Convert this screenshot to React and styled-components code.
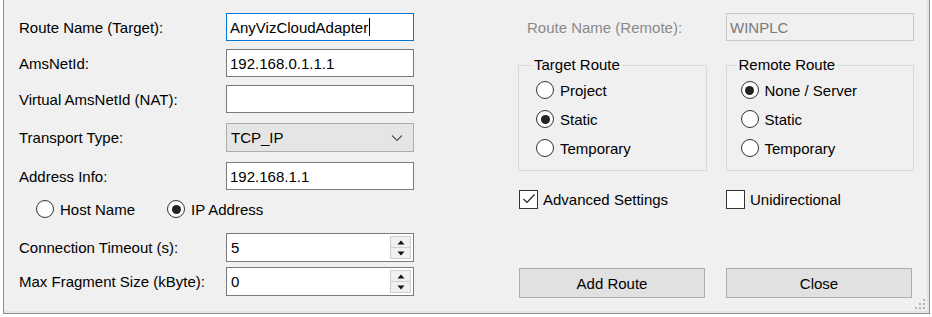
import React from "react";
import styled, { createGlobalStyle } from "styled-components";

const GlobalStyle = createGlobalStyle`
  html, body {
    margin: 0;
    padding: 0;
    background: #ffffff;
  }
  body {
    font-family: "Liberation Sans", Arial, sans-serif;
    font-size: 15px;
    color: #000;
  }
`;

const AddRouteDialog = () => {
  return (
    <Frame>
      <GlobalStyle />
      <LeftColumn>
        <Row $mt={0}>
          <Label>Route Name (Target):</Label>
          <TextBox $focused>
            AnyVizCloudAdapter
            <Caret />
          </TextBox>
        </Row>
        <Row $mt={8}>
          <Label>AmsNetId:</Label>
          <TextBox>192.168.0.1.1.1</TextBox>
        </Row>
        <Row $mt={8}>
          <Label>Virtual AmsNetId (NAT):</Label>
          <TextBox />
        </Row>
        <Row $mt={10}>
          <Label>Transport Type:</Label>
          <Combo>
            TCP_IP
            <svg width="12" height="8" viewBox="0 0 12 8">
              <polyline points="1,1.5 6,6.5 11,1.5" fill="none" stroke="#555" strokeWidth="1.2" />
            </svg>
          </Combo>
        </Row>
        <Row $mt={11}>
          <Label>Address Info:</Label>
          <TextBox>192.168.1.1</TextBox>
        </Row>
        <RadioRow>
          <Radio label="Host Name" />
          <Radio label="IP Address" checked />
        </RadioRow>
        <Row $mt={14}>
          <Label>Connection Timeout (s):</Label>
          <SpinBox value="5" />
        </Row>
        <Row $mt={6}>
          <Label>Max Fragment Size (kByte):</Label>
          <SpinBox value="0" />
        </Row>
      </LeftColumn>

      <RightColumn>
        <Row $mt={0}>
          <Label $disabled $indent={8}>Route Name (Remote):</Label>
          <TextBox $disabled>WINPLC</TextBox>
        </Row>
        <Groups>
          <Group $inset={17}>
            <Legend>Target Route</Legend>
            <Radio label="Project" />
            <Radio label="Static" checked />
            <Radio label="Temporary" />
          </Group>
          <Group $inset={14}>
            <Legend>Remote Route</Legend>
            <Radio label="None / Server" checked />
            <Radio label="Static" />
            <Radio label="Temporary" />
          </Group>
        </Groups>
        <Checks>
          <Check label="Advanced Settings" checked />
          <Check label="Unidirectional" />
        </Checks>
        <Buttons>
          <Button>Add Route</Button>
          <Button>Close</Button>
        </Buttons>
      </RightColumn>
      <Grip>
        {[
          [2, 0],
          [1, 1],
          [2, 1],
          [0, 2],
          [1, 2],
          [2, 2],
        ].map(([c, r]) => (
          <Dot key={`${c}-${r}`} style={{ left: c * 4, top: r * 4 }} />
        ))}
      </Grip>
    </Frame>
  );
};

const Radio = ({ label, checked }) => (
  <RadioItem>
    <Circle $checked={checked} />
    <span>{label}</span>
  </RadioItem>
);

const Check = ({ label, checked }) => (
  <CheckItem>
    <Box>
      {checked && (
        <svg width="14" height="14" viewBox="0 0 14 14">
          <polyline points="1.5,7 5,10.5 12.5,2.5" fill="none" stroke="#222" strokeWidth="1.2" />
        </svg>
      )}
    </Box>
    <span>{label}</span>
  </CheckItem>
);

const SpinBox = ({ value }) => (
  <Spin>
    <span>{value}</span>
    <SpinButtons>
      <SpinHalf>
        <svg width="8" height="5" viewBox="0 0 8 5">
          <polygon points="0.5,4.5 4,0.5 7.5,4.5" fill="#111" />
        </svg>
      </SpinHalf>
      <SpinHalf $bottom>
        <svg width="8" height="5" viewBox="0 0 8 5">
          <polygon points="0.5,0.5 4,4.5 7.5,0.5" fill="#111" />
        </svg>
      </SpinHalf>
    </SpinButtons>
  </Spin>
);

const Frame = styled.div`
  position: relative;
  box-sizing: border-box;
  margin-left: 3px;
  width: 927px;
  height: 314px;
  background: #f0f0f0;
  border: 1px solid #8e8e8e;
  border-top: none;
  box-shadow: inset -2px -2px 0 #e4e4e4;
  display: flex;
  padding: 13px 0 0 15px;
`;

const LeftColumn = styled.div`
  width: 500px;
  display: flex;
  flex-direction: column;
`;

const RightColumn = styled.div`
  width: 395px;
  display: flex;
  flex-direction: column;
`;

const Row = styled.div`
  display: grid;
  grid-template-columns: 207px 188px;
  align-items: center;
  height: 28px;
  margin-top: ${(p) => p.$mt}px;
`;

const Label = styled.div`
  padding-left: ${(p) => p.$indent || 0}px;
  color: ${(p) => (p.$disabled ? "#8a8a8a" : "#000")};
  white-space: nowrap;
`;

const TextBox = styled.div`
  box-sizing: border-box;
  height: 28px;
  display: flex;
  align-items: center;
  padding-left: 3px;
  background: ${(p) => (p.$disabled ? "#f0f0f0" : "#fff")};
  color: ${(p) => (p.$disabled ? "#7a7a7a" : "#000")};
  border: 1px solid
    ${(p) => (p.$focused ? "#0078d7" : p.$disabled ? "#c8c8c8" : "#7a7a7a")};
  white-space: nowrap;
`;

const Caret = styled.span`
  display: inline-block;
  width: 1px;
  height: 18px;
  background: #000;
  margin-left: 1px;
`;

const Combo = styled.div`
  box-sizing: border-box;
  height: 29px;
  display: flex;
  align-items: center;
  justify-content: space-between;
  padding: 0 10px 0 4px;
  background: #e5e5e5;
  border: 1px solid #adadad;
`;

const RadioRow = styled.div`
  display: flex;
  gap: 32px;
  padding-left: 17px;
  margin-top: 9px;
  height: 20px;
  align-items: center;
`;

const RadioItem = styled.div`
  display: flex;
  align-items: center;
  gap: 6px;
  height: 20px;
`;

const Circle = styled.span`
  position: relative;
  box-sizing: border-box;
  width: 18px;
  height: 18px;
  border-radius: 50%;
  border: 1px solid #333;
  background: #fff;
  &::after {
    content: "";
    display: ${(p) => (p.$checked ? "block" : "none")};
    position: absolute;
    left: 3.5px;
    top: 3.5px;
    width: 9px;
    height: 9px;
    border-radius: 50%;
    background: #222;
  }
`;

const Spin = styled.div`
  box-sizing: border-box;
  height: 29px;
  display: flex;
  align-items: center;
  justify-content: space-between;
  padding: 0 2px 0 4px;
  background: #fff;
  border: 1px solid #7a7a7a;
`;

const SpinButtons = styled.div`
  display: flex;
  flex-direction: column;
  width: 21px;
  height: 23px;
  border: 1px solid #cfcfcf;
  box-sizing: border-box;
`;

const SpinHalf = styled.div`
  flex: 1;
  display: flex;
  align-items: center;
  justify-content: center;
  background: #f0f0f0;
  border-top: ${(p) => (p.$bottom ? "1px solid #cfcfcf" : "none")};
`;

const Groups = styled.div`
  display: flex;
  gap: 19px;
  margin-top: 15px;
  margin-left: -1px;
`;

const Group = styled.fieldset`
  box-sizing: border-box;
  width: 189px;
  height: 115px;
  margin: 0;
  padding: 6px 0 0 ${(p) => p.$inset}px;
  border: 1px solid #d9d9d9;
  display: flex;
  flex-direction: column;
  gap: 9px;
`;

const Legend = styled.legend`
  padding: 0 2px;
  margin-left: -4px;
  line-height: 18px;
`;

const Checks = styled.div`
  display: flex;
  gap: 53px;
  margin-top: 18px;
`;

const CheckItem = styled.div`
  display: flex;
  align-items: center;
  gap: 5px;
  width: 154px;
  height: 20px;
  &:last-child {
    width: auto;
  }
`;

const Box = styled.span`
  box-sizing: border-box;
  width: 19px;
  height: 19px;
  border: 1px solid #333;
  background: #fff;
  display: flex;
  align-items: center;
  justify-content: center;
`;

const Buttons = styled.div`
  display: flex;
  gap: 21px;
  margin-top: 59px;
`;

const Button = styled.button`
  box-sizing: border-box;
  width: 186px;
  height: 30px;
  background: #e1e1e1;
  border: 1px solid #adadad;
  font-family: "Liberation Sans", Arial, sans-serif;
  font-size: 15px;
  color: #000;
  padding: 0;
`;

const Grip = styled.div`
  position: absolute;
  right: 3px;
  bottom: 3px;
  width: 11px;
  height: 11px;
`;

const Dot = styled.span`
  position: absolute;
  width: 2px;
  height: 2px;
  background: #b4b4b4;
`;

export default AddRouteDialog;
